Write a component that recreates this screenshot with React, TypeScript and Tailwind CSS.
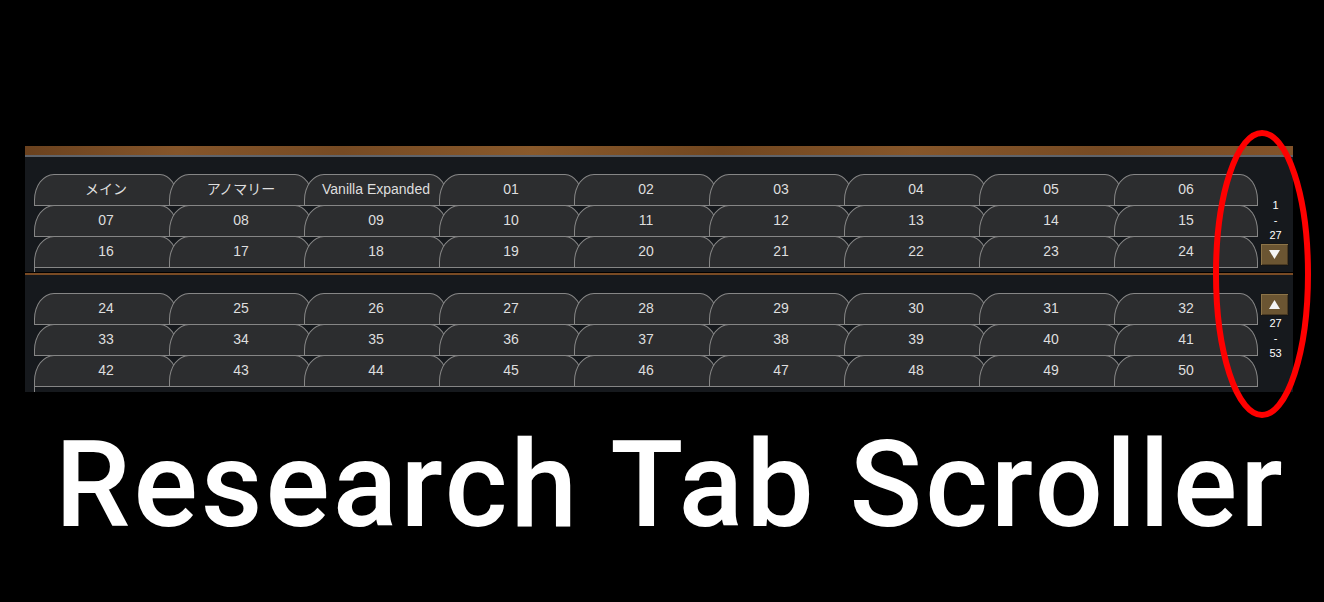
import React from 'react';

const panelA = [
  ['メイン', 'アノマリー', 'Vanilla Expanded', '01', '02', '03', '04', '05', '06'],
  ['07', '08', '09', '10', '11', '12', '13', '14', '15'],
  ['16', '17', '18', '19', '20', '21', '22', '23', '24'],
];

const panelB = [
  ['24', '25', '26', '27', '28', '29', '30', '31', '32'],
  ['33', '34', '35', '36', '37', '38', '39', '40', '41'],
  ['42', '43', '44', '45', '46', '47', '48', '49', '50'],
];

function Tab({ label, first }: { label: string; first: boolean }) {
  return (
    <div
      className={`relative flex h-[32px] w-[144px] shrink-0 items-center justify-center rounded-tl-[20px_26px] rounded-tr-[18px_26px] border border-[#868686] bg-[#2c2d2f] text-[14px] text-[#dedede] ${
        first ? '' : '-ml-[9px]'
      }`}
    >
      <span className="pb-px">{label}</span>
    </div>
  );
}

function TabGrid({ rows }: { rows: string[][] }) {
  return (
    <div className="flex flex-col">
      {rows.map((row, r) => (
        <div key={r} className={`flex ${r > 0 ? '-mt-px' : ''}`}>
          {row.map((label, i) => (
            <Tab key={label + i} label={label} first={i === 0} />
          ))}
        </div>
      ))}
    </div>
  );
}

function ScrollButton({ up }: { up: boolean }) {
  return (
    <div className="ml-[2px] flex h-[23px] w-[29px] items-center justify-center border border-[#161616] bg-[#6b5532] shadow-[inset_1px_1px_0_#8c7448,inset_-1px_-1px_0_#4a3a22]">
      <svg width="11" height="9" viewBox="0 0 11 9">
        {up ? <polygon points="5.5,0 11,9 0,9" fill="#f4f4f4" /> : <polygon points="0,0 11,0 5.5,9" fill="#f4f4f4" />}
      </svg>
    </div>
  );
}

function Counter({ from, to }: { from: string; to: string }) {
  return (
    <div className="flex w-[35px] flex-col items-center text-[11px] leading-[15px] text-white">
      <span>{from}</span>
      <span>-</span>
      <span>{to}</span>
    </div>
  );
}

export default function App() {
  return (
    <div
      className="relative h-[602px] w-[1324px] overflow-hidden bg-black pt-[146px]"
      style={{ fontFamily: '"Liberation Sans", Arial, "Noto Sans CJK JP", sans-serif' }}
    >
      <div className="ml-[25px] w-[1268px]">
        {/* wood header */}
        <div className="h-[9px] bg-[linear-gradient(90deg,#6a411e,#85552a_12%,#764a23_25%,#89592b_40%,#71461f_55%,#86562a_70%,#764a23_85%,#82532a)]" />
        <div className="h-[2px] bg-[#5f636a]" />

        {/* first page */}
        <div className="flex h-[115px] bg-[#16191d]">
          <div className="pl-[9px] pt-[17px]">
            <TabGrid rows={panelA} />
            <div className="h-[4px] w-px bg-[#868686]" />
          </div>
          <div className="flex flex-col pt-[41px]">
            <Counter from="1" to="27" />
            <ScrollButton up={false} />
          </div>
        </div>

        <div className="h-px bg-black" />
        <div className="h-[2px] bg-[#7a4b24]" />

        {/* second page */}
        <div className="flex h-[117px] bg-[#16191d]">
          <div className="pl-[9px] pt-[18px]">
            <TabGrid rows={panelB} />
            <div className="h-[5px] w-px bg-[#868686]" />
          </div>
          <div className="flex flex-col pt-[18px]">
            <ScrollButton up={true} />
            <Counter from="27" to="53" />
          </div>
        </div>
      </div>

      <h1
        className="mt-[23px] pl-[55px] text-[120px] font-medium leading-[140px] tracking-[3px] text-white"
        style={{ fontFamily: 'Roboto, "Liberation Sans", sans-serif' }}
      >
        Research Tab Scroller
      </h1>

      {/* highlight ring */}
      <svg className="pointer-events-none absolute left-[1208px] top-[124px]" width="112" height="300" viewBox="0 0 112 300">
        <ellipse cx="54" cy="150" rx="46" ry="141" fill="none" stroke="#ff0000" strokeWidth="6" />
      </svg>
    </div>
  );
}
